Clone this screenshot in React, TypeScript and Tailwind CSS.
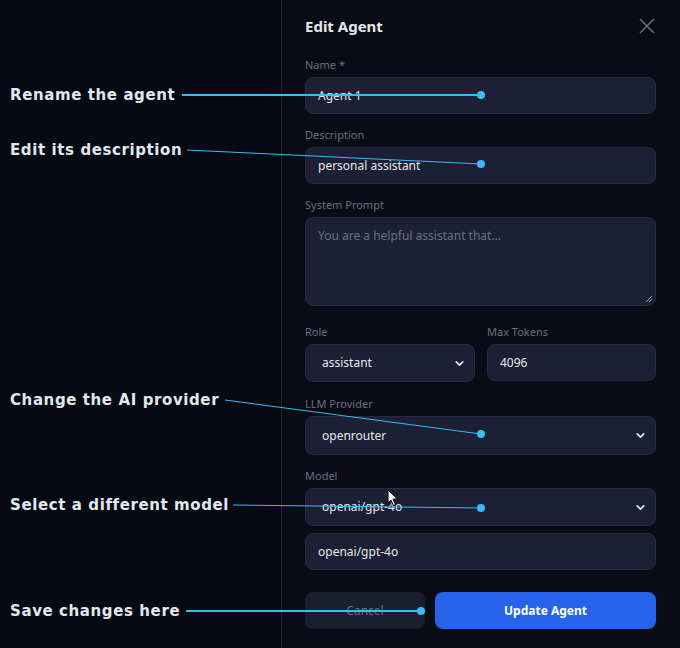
import { ChevronDown } from "lucide-react";

const Field = ({ label, children }: { label: string; children: React.ReactNode }) => (
  <div className="flex flex-col gap-[4px]">
    <label className="text-[11px] leading-4 text-[#6b7080]">{label}</label>
    {children}
  </div>
);

const box =
  "h-[37px] w-full rounded-lg border border-[#272a40] bg-[#1d2034] px-3 text-[12px] text-[#e5e7eb] flex items-center";

const Select = ({ value, h = "h-[38px]" }: { value: string; h?: string }) => (
  <div className={box + " " + h + " justify-between pl-4 pr-2"}>
    <span>{value}</span>
    <ChevronDown size={13} strokeWidth={3.2} className="text-[#e5e7eb]" />
  </div>
);

const notes = [
  { text: "Rename the agent", y: 95, x1: 182, y1: 95, x2: 481, y2: 95 },
  { text: "Edit its description", y: 150, x1: 187, y1: 150, x2: 481, y2: 164 },
  { text: "Change the AI provider", y: 400, x1: 225, y1: 400, x2: 481, y2: 434 },
  { text: "Select a different model", y: 505, x1: 233, y1: 505, x2: 481, y2: 508 },
  { text: "Save changes here", y: 611, x1: 186, y1: 611, x2: 421, y2: 611 },
];

export default function App() {
  return (
    <div className="relative h-[648px] w-[680px] overflow-hidden bg-[#070a12] font-['Noto_Sans',sans-serif]">
      <div className="ml-[281px] flex h-full flex-col border-l border-[#1c2030] bg-[#090c15] pl-[23px] pr-6 pt-4">
        <div className="flex items-center justify-between">
          <h2 className="text-[15px] font-bold leading-5 text-[#e5e7eb]">Edit Agent</h2>
          <svg width="18" height="18" viewBox="0 0 18 18" className="text-[#6b7080]">
            <path d="M2 2L16 16M16 2L2 16" stroke="currentColor" strokeWidth="1.5" />
          </svg>
        </div>

        <div className="mt-[21px] flex flex-col">
          <Field label="Name *">
            <div className={box}>Agent 1</div>
          </Field>
          <div className="mt-[13px]">
            <Field label="Description">
              <div className={box}>personal assistant</div>
            </Field>
          </div>
          <div className="mt-[13px]">
            <Field label="System Prompt">
              <div className="relative h-[89px] w-full rounded-lg border border-[#272a40] bg-[#1d2034] px-3 pt-[9px] text-[12px] text-[#6b7080]">
                You are a helpful assistant that...
                <svg width="6" height="6" viewBox="0 0 6 6" className="absolute bottom-[3px] right-[3px] text-[#9ca3af]">
                  <path d="M0 6L6 0M3 6L6 3" stroke="currentColor" strokeWidth="1" />
                </svg>
              </div>
            </Field>
          </div>
          <div className="mt-[18px] grid grid-cols-[170px_1fr] gap-3">
            <Field label="Role">
              <Select value="assistant" />
            </Field>
            <Field label="Max Tokens">
              <div className={box + " h-[36px]"}>4096</div>
            </Field>
          </div>
          <div className="mt-[14px]">
            <Field label="LLM Provider">
              <Select value="openrouter" h="h-[39px]" />
            </Field>
          </div>
          <div className="mt-[13px]">
            <Field label="Model">
              <Select value="openai/gpt-4o" />
            </Field>
          </div>
          <div className={box + " mt-[7px]"}>openai/gpt-4o</div>
        </div>

        <div className="mt-[22px] flex gap-[10px]">
          <button className="h-[37px] w-[120px] rounded-lg bg-[#1b1e2e] text-[12px] text-[#6b7080]">Cancel</button>
          <button className="h-[37px] flex-1 rounded-lg bg-[#2563eb] text-[12px] font-bold text-white">Update Agent</button>
        </div>
      </div>

      {notes.map((n) => (
        <div
          key={n.text}
          className="absolute left-[10px] font-['DejaVu_Sans',sans-serif] text-[15px] font-bold leading-5 tracking-[0.6px] text-[#e2e8f0]"
          style={{ top: n.y - 10 }}
        >
          {n.text}
        </div>
      ))}
      <svg className="pointer-events-none absolute inset-0" width="680" height="648">
        {notes.map((n) => (
          <g key={n.text}>
            <line x1={n.x1} y1={n.y1} x2={n.x2} y2={n.y2} stroke="#38bdf8" strokeWidth={n.y1 === n.y2 ? 2 : 1} />
            <circle cx={n.x2} cy={n.y2} r="4" fill="#38bdf8" />
          </g>
        ))}
      </svg>
      <svg className="pointer-events-none absolute left-[387px] top-[489px]" width="12" height="18" viewBox="0 0 12 18">
        <path d="M1 1L1 14L4 11L6.5 16.5L8.5 15.5L6 10L10.5 10Z" fill="white" stroke="black" strokeWidth="1" />
      </svg>
    </div>
  );
}
